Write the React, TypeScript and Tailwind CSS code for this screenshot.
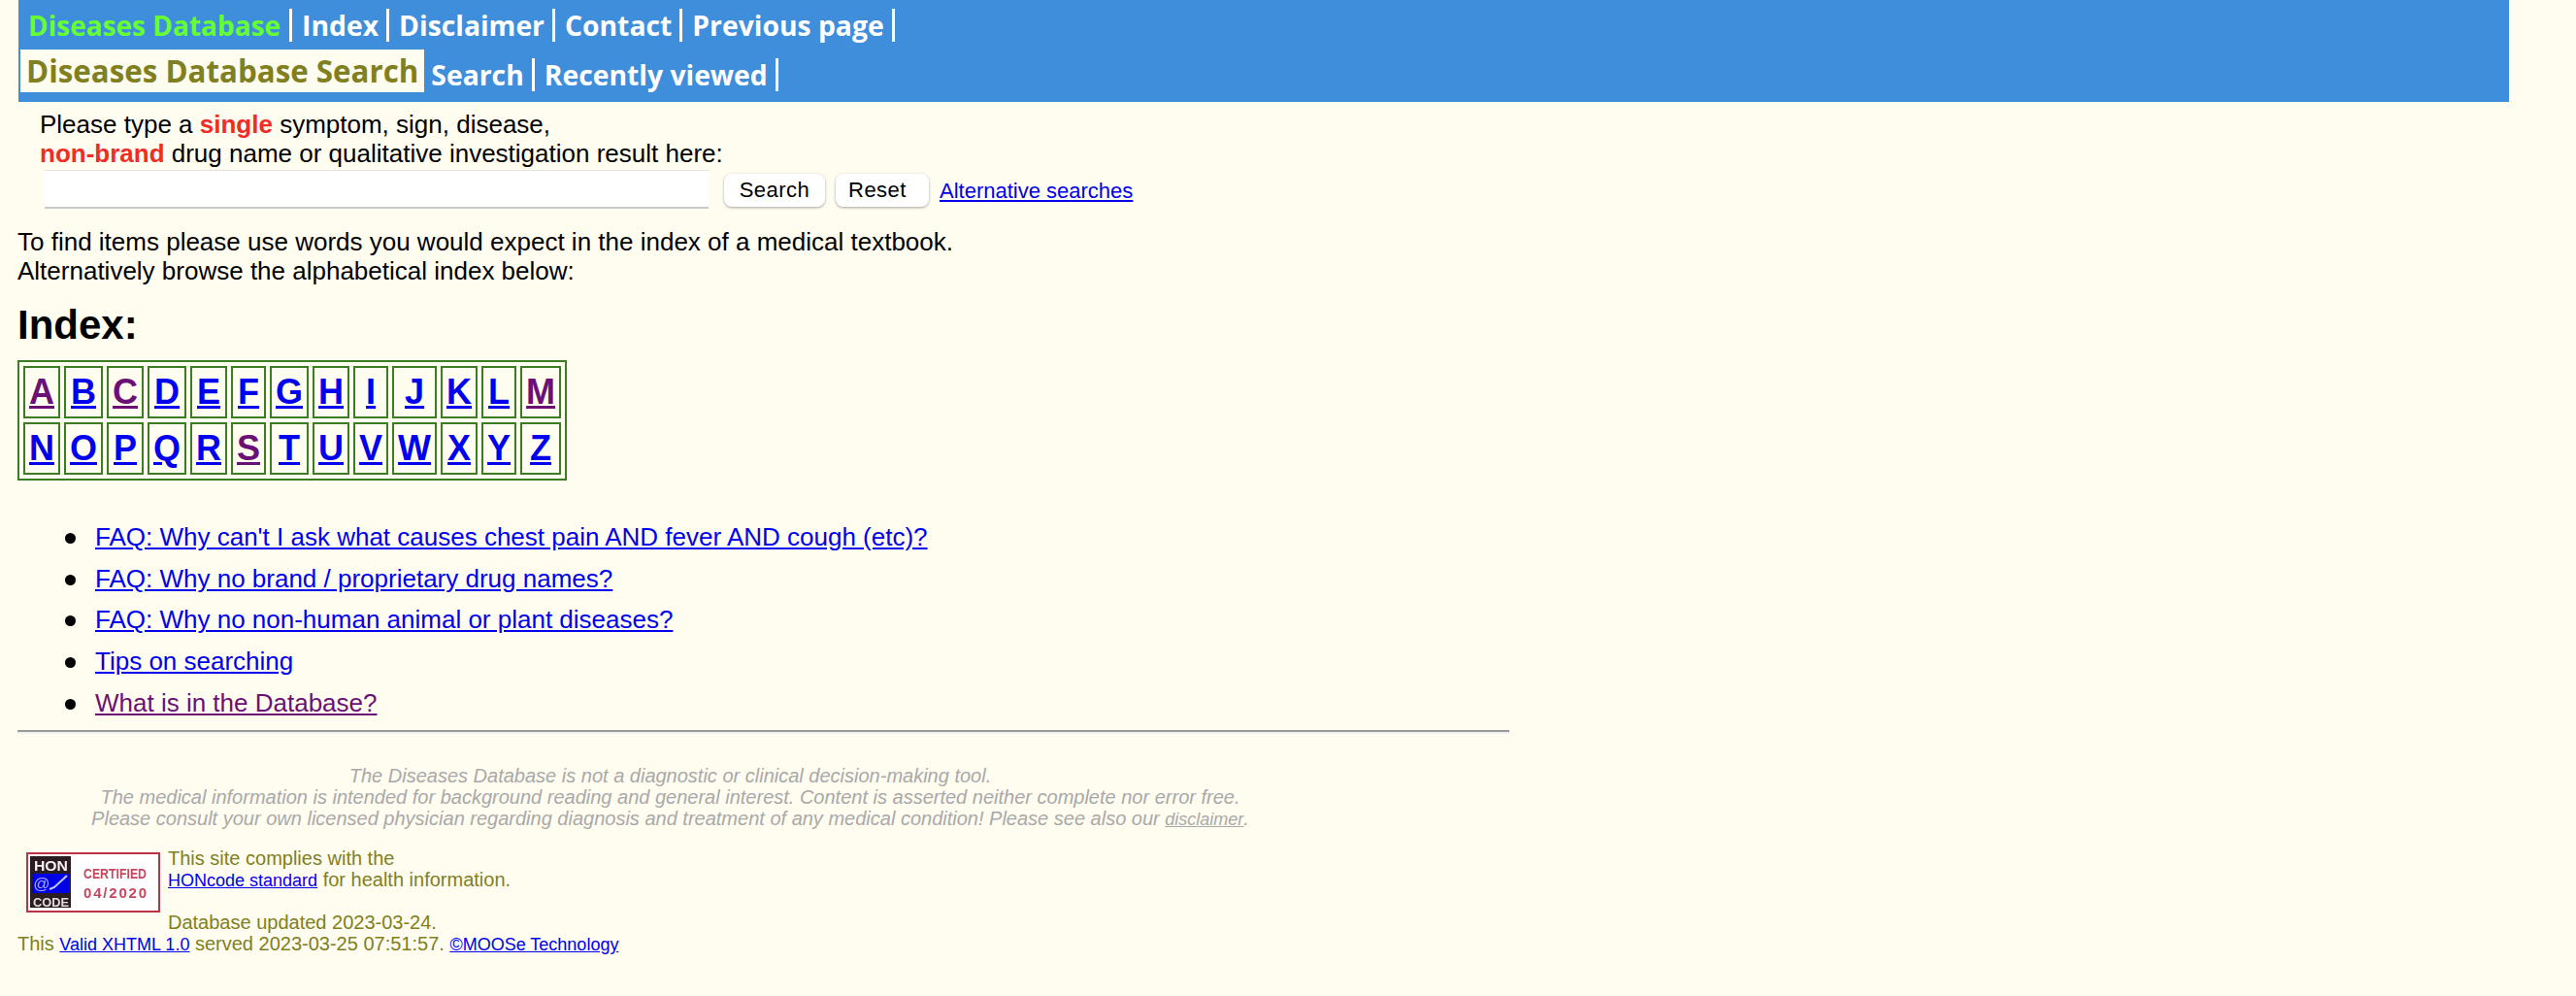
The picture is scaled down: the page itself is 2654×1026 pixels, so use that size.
const row1 = ["A", "B", "C", "D", "E", "F", "G", "H", "I", "J", "K", "L", "M"];
const row2 = ["N", "O", "P", "Q", "R", "S", "T", "U", "V", "W", "X", "Y", "Z"];
const visited = ["A", "C", "M", "S"];

const faqs = [
  { text: "FAQ: Why can't I ask what causes chest pain AND fever AND cough (etc)?" },
  { text: "FAQ: Why no brand / proprietary drug names?" },
  { text: "FAQ: Why no non-human animal or plant diseases?" },
  { text: "Tips on searching" },
  { text: "What is in the Database?", seen: true },
];

function NavItem({ label }: { label: string }) {
  return (
    <a href="#" className="flex h-[34px] items-center border-r-[3px] border-white pl-[10px] pr-[8px] text-white">
      {label}
    </a>
  );
}

function LetterRow({ letters }: { letters: string[] }) {
  return (
    <tr>
      {letters.map((l) => (
        <td key={l} className="border-2 border-[#3a7d23] px-[4px] py-[4px] text-center text-[36px] font-bold leading-[42px]">
          <a href="#" className={visited.includes(l) ? "text-[#6b1175] underline" : "text-[#0000ee] underline"}>
            {l}
          </a>
        </td>
      ))}
    </tr>
  );
}

function HonBadge() {
  return (
    <svg width="138" height="62" viewBox="0 0 138 62" className="mt-[5px] shrink-0">
      <rect x="1" y="1" width="136" height="60" fill="#fff" stroke="#bd3246" strokeWidth="2" />
      <g className="blur-[0.5px]">
        <rect x="4" y="4" width="42" height="53" fill="#2a1c20" />
        <rect x="6" y="22" width="38" height="20" fill="#0000e6" />
        <text x="25.5" y="19" textAnchor="middle" fill="#f4f0f0" fontSize="15" fontWeight="700" textLength="35" lengthAdjust="spacingAndGlyphs" fontFamily="Liberation Sans, sans-serif">HON</text>
        <text x="25.5" y="56" textAnchor="middle" fill="#e0dcdc" fontSize="13" fontWeight="700" textLength="37" lengthAdjust="spacingAndGlyphs" fontFamily="Liberation Sans, sans-serif">CODE</text>
        <text x="16" y="38" textAnchor="middle" fill="#a8a8ff" fontSize="17" fontFamily="Liberation Sans, sans-serif">@</text>
        <path d="M24 38 L29 36 L42 24" fill="none" stroke="#c8c8ff" strokeWidth="2" />
        <text x="91.5" y="27" textAnchor="middle" fill="#c9475c" fontSize="15" fontWeight="700" textLength="65" lengthAdjust="spacingAndGlyphs" fontFamily="Liberation Sans, sans-serif">CERTIFIED</text>
        <text x="91.5" y="47" textAnchor="middle" fill="#c9475c" fontSize="15" fontWeight="700" textLength="65" fontFamily="Liberation Sans, sans-serif">04/2020</text>
      </g>
    </svg>
  );
}

export default function App() {
  return (
    <div className="min-h-[1026px] bg-[#fffcf0] font-['Liberation_Sans',Arial,sans-serif] text-black">
      {/* Header */}
      <div className="ml-[19px] mr-[69px] h-[105px] bg-[#3f8edb] font-['Open_Sans',sans-serif] text-[28.3px] font-bold">
        <div className="flex pt-[9px]">
          <a href="#" className="flex h-[34px] items-center border-r-[3px] border-white pl-[10px] pr-[9px] text-[28px] text-[#66ff33]">
            Diseases Database
          </a>
          <NavItem label="Index" />
          <NavItem label="Disclaimer" />
          <NavItem label="Contact" />
          <NavItem label="Previous page" />
        </div>
        <div className="mt-[8px] flex items-start">
          <div className="ml-[2px] flex h-[44px] items-center bg-[#fffcf0] px-[6px] text-[31.3px] text-[#808020]">
            Diseases Database Search
          </div>
          <div className="-ml-[3px] mt-[9px] flex">
            <NavItem label="Search" />
            <NavItem label="Recently viewed" />
          </div>
        </div>
      </div>

      {/* Search form */}
      <div className="pl-[41px] pt-[8px] text-[26px] leading-[30px]">
        <div>
          Please type a <b className="text-[#ee2e24]">single</b> symptom, sign, disease,
        </div>
        <div>
          <b className="text-[#ee2e24]">non-brand</b> drug name or qualitative investigation result here:
        </div>
        <div className="mt-[2px] flex items-center">
          <input className="ml-[5px] h-[40px] w-[684px] border-b-2 border-t border-[#e4e2dc] border-b-[#c9c9c9] bg-white" />
          <button className="ml-[16px] mt-[1px] h-[34px] w-[104px] rounded-[8px] bg-white text-[22px] tracking-[0.5px] shadow-[0_1px_3px_rgba(0,0,0,0.35)]">
            Search
          </button>
          <button className="ml-[11px] mt-[1px] h-[34px] w-[96px] rounded-[8px] bg-white pr-[10px] text-[22px] tracking-[0.5px] shadow-[0_1px_3px_rgba(0,0,0,0.35)]">
            Reset
          </button>
          <a href="#" className="ml-[11px] mt-[4px] text-[22px] text-[#0000ee] underline">
            Alternative searches
          </a>
        </div>
      </div>

      <div className="px-[18px]">
        <p className="mt-[19px] text-[26px] leading-[30px]">
          To find items please use words you would expect in the index of a medical textbook.
          <br />
          Alternatively browse the alphabetical index below:
        </p>
        <h2 className="mt-[17px] text-[42px] font-bold leading-[48px]">Index:</h2>

        {/* Alphabet table */}
        <table className="mt-[12px] border-separate border-spacing-[4px] border-2 border-[#3a7d23]">
          <tbody>
            <LetterRow letters={row1} />
            <LetterRow letters={row2} />
          </tbody>
        </table>

        <ul className="mt-[37px] pl-[49px] text-[26px] leading-[42.7px]">
          {faqs.map((f) => (
            <li key={f.text} className="flex items-center gap-[20px]">
              <span className="mt-[2px] size-[11px] rounded-full bg-black" />
              <a href="#" className={f.seen ? "text-[#6b1175] underline" : "text-[#0000ee] underline"}>
                {f.text}
              </a>
            </li>
          ))}
        </ul>

        <hr className="mt-[6px] h-[4px] w-[1537px] border-0 border-t-2 border-b-2 border-t-[#999999] border-b-[#efefef]" />

        {/* Disclaimer */}
        <p className="mt-[32px] w-[1345px] text-center text-[20px] italic leading-[22px] text-[#a9a9a9]">
          The Diseases Database is not a diagnostic or clinical decision-making tool.
          <br />
          The medical information is intended for background reading and general interest. Content is asserted neither complete nor error free.
          <br />
          Please consult your own licensed physician regarding diagnosis and treatment of any medical condition! Please see also our{" "}
          <a href="#" className="text-[18px] leading-none underline">disclaimer</a>.
        </p>

        {/* Footer */}
        <div className="text-[20px] leading-[22px] text-[#808020]">
          <div className="mt-[19px] flex gap-[8px] pl-[9px]">
            <HonBadge />
            <div>
              This site complies with the
              <br />
              <a href="#" className="text-[18px] leading-none text-[#0000ee] underline">HONcode standard</a> for health information.
              <br />
              <br />
              Database updated 2023-03-24.
            </div>
          </div>
          <div>
            This <a href="#" className="text-[18px] leading-none text-[#0000ee] underline">Valid XHTML 1.0</a> served 2023-03-25 07:51:57.{" "}
            <a href="#" className="text-[18px] leading-none text-[#0000ee] underline">©MOOSe Technology</a>
          </div>
        </div>
      </div>
    </div>
  );
}
